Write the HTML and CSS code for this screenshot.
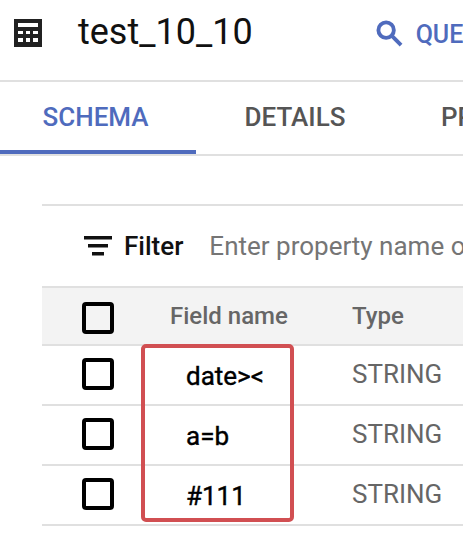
FILE: index.html
```html
<!DOCTYPE html>
<html lang="en">

<head>
    <meta charset="UTF-8" />
    <title>test_10_10</title>
    <link rel="stylesheet" href="styles.css">
</head>

<body>
    <header class="top-bar">
        <svg class="table-icon" viewBox="0 0 28 28">
            <path fill="#212121" fill-rule="evenodd"
                d="M0 0H28V28H0ZM4 4V8H24V4ZM4 12V15H9V12ZM12 12V15H16V12ZM19 12V15H24V12ZM4 19V23H9V19ZM12 19V23H16V19ZM19 19V23H24V19Z" />
        </svg>
        <h1 class="title">test_10_10</h1>
        <svg class="search-icon" viewBox="0 0 28 28">
            <circle cx="10.5" cy="10.5" r="8" fill="none" stroke="#4f6bbd" stroke-width="4" />
            <path d="M16 16L26 26" stroke="#4f6bbd" stroke-width="4" />
        </svg>
        <span class="query">QUE</span>
    </header>

    <nav class="tabs">
        <span class="tab active">SCHEMA</span>
        <span class="tab">DETAILS</span>
        <span class="tab">PR</span>
    </nav>

    <main class="schema">
        <div class="filter">
            <svg class="filter-icon" viewBox="0 0 28 20">
                <path fill="#111" d="M0 0H28V3.5H0ZM4 8H24V11.5H4ZM8 16H20V19.5H8Z" />
            </svg>
            <span class="filter-label">Filter</span>
            <span class="filter-hint">Enter property name o</span>
        </div>

        <div class="row head">
            <span class="check"></span>
            <span class="name">Field name</span>
            <span class="type">Type</span>
        </div>
        <div class="rows">
            <div class="row">
                <span class="check"></span>
                <span class="name">date&gt;&lt;</span>
                <span class="type">STRING</span>
            </div>
            <div class="row">
                <span class="check"></span>
                <span class="name">a=b</span>
                <span class="type">STRING</span>
            </div>
            <div class="row">
                <span class="check"></span>
                <span class="name">#111</span>
                <span class="type">STRING</span>
            </div>
            <!-- red box drawn over the screenshot -->
            <div class="highlight"></div>
        </div>
    </main>
</body>

</html>
```

FILE: styles.css
```css
html,
body {
    margin: 0;
    height: 100%;
}

body {
    width: 463px;
    height: 541px;
    overflow: hidden;
    background: #fff;
    font-family: Roboto, "Liberation Sans", sans-serif;
    white-space: nowrap;
}

/* top bar */
.top-bar {
    display: flex;
    align-items: center;
    height: 80px;
    padding-left: 14px;
    border-bottom: 2px solid #e0e0e0;
    overflow: hidden;
}

.table-icon {
    width: 28px;
    height: 28px;
    margin-top: -14px;
    flex: none;
}

.title {
    margin: -16px 0 0 36px;
    font-size: 36px;
    font-weight: 400;
    color: #111;
    flex: none;
}

.search-icon {
    width: 27px;
    height: 27px;
    margin: -14px 0 0 123px;
    flex: none;
}

.query {
    margin: -12px 0 0 13px;
    font-size: 25px;
    font-weight: 500;
    color: #4f6bbd;
    flex: none;
}

/* tabs */
.tabs {
    display: flex;
    height: 72px;
    border-bottom: 2px solid #e0e0e0;
    overflow: hidden;
}

.tab {
    width: 196px;
    height: 72px;
    flex: none;
    box-sizing: border-box;
    padding: 20px 0 0 2px;
    text-align: center;
    font-size: 26px;
    font-weight: 500;
    color: #555;
}

.tab:nth-child(3) {
    width: auto;
    padding-left: 49px;
}

.tab.active {
    padding: 20px 5px 0 0;
    color: #4f6bbd;
    border-bottom: 4px solid #4f6bbd;
}

/* schema table */
.schema {
    margin: 48px 0 0 42px;
    border-top: 2px solid #e0e0e0;
}

.filter {
    display: flex;
    align-items: center;
    height: 80px;
    padding-left: 42px;
    overflow: hidden;
}

.filter-icon {
    width: 28px;
    height: 20px;
    flex: none;
}

.filter-label {
    margin-left: 12px;
    font-size: 26px;
    font-weight: 500;
    color: #111;
}

.filter-hint {
    margin-left: 26px;
    font-size: 26px;
    color: #757575;
}

.row {
    display: flex;
    align-items: center;
    height: 58px;
    border-bottom: 2px solid #e0e0e0;
}

.head {
    height: 56px;
    background: #f3f3f3;
    border-top: 2px solid #e0e0e0;
}

.check {
    width: 32px;
    height: 32px;
    margin: -2px 0 0 40px;
    flex: none;
    box-sizing: border-box;
    border: 4px solid #000;
    border-radius: 4px;
}

.head .check {
    margin-top: 4px;
}

.name {
    width: 238px;
    padding-left: 72px;
    margin-top: 2px;
    box-sizing: border-box;
    font-size: 26px;
    color: #000;
    /* sits between regular and medium, no such weight installed */
    -webkit-text-stroke: 0.4px #000;
    flex: none;
}

.head .name {
    padding-left: 56px;
    margin-top: 0;
    font-size: 24px;
    font-weight: 500;
    color: #666;
    -webkit-text-stroke: 0;
}

.type {
    margin-top: -2px;
    font-size: 26px;
    color: #666;
}

.head .type {
    margin-top: 0;
    font-size: 24px;
    font-weight: 500;
}

.rows {
    position: relative;
}

.highlight {
    position: absolute;
    left: 99px;
    top: -2px;
    width: 153px;
    height: 178px;
    box-sizing: border-box;
    border: 4px solid #d14f52;
    border-radius: 5px;
}
```
